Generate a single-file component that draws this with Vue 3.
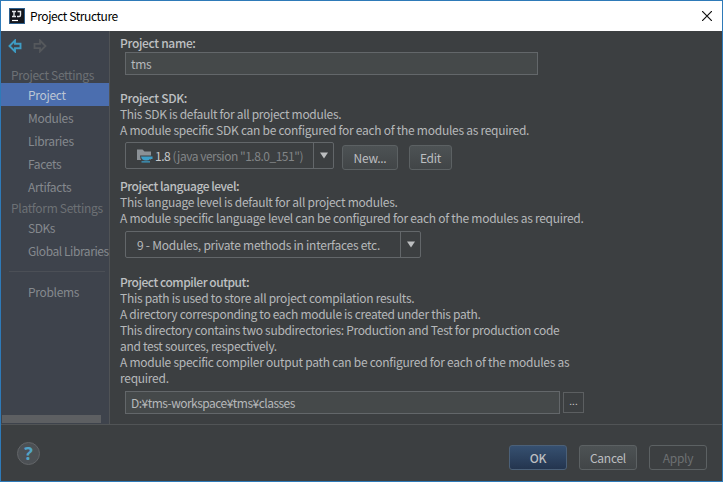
<script setup>
const projectItems = ['Project', 'Modules', 'Libraries', 'Facets', 'Artifacts']
const platformItems = ['SDKs', 'Global Libraries']
</script>

<template>
  <div class="window">
    <header class="titlebar">
      <svg class="logo" width="16" height="16" viewBox="0 0 16 16">
        <rect width="16" height="16" fill="#2f5f8c" />
        <rect x="1" y="1" width="14" height="14" fill="#14161c" />
        <path d="M3 3.500h4M5 3.500v5M3 8.500h4M8.500 3.500h3v3.500q0 1.500-1.300 1.500H8" fill="none" stroke="#e6e8ea" stroke-width="1.4" />
        <path d="M3 12.500h6" stroke="#fff" stroke-width="1.2" />
      </svg>
      <span class="title">Project Structure</span>
      <svg class="close" width="10" height="10" viewBox="0 0 10 10">
        <path d="M0 0L10 10M10 0L0 10" stroke="#111" stroke-width="1.2" />
      </svg>
    </header>
    <div class="body">
      <nav class="sidebar">
        <div class="arrows">
          <svg width="14" height="14" viewBox="0 0 14 14"><path d="M7 1.500L1.500 7L7 12.500V9.200H12.500V4.800H7Z" fill="none" stroke="#3e9cc4" stroke-width="1.9" /></svg>
          <svg width="14" height="14" viewBox="0 0 14 14"><path d="M7 1.500L12.500 7L7 12.500V9.200H1.500V4.800H7Z" fill="none" stroke="#55585c" stroke-width="1.8" /></svg>
        </div>
        <div class="group first"><span>Project Settings</span></div>
        <div v-for="(item, i) in projectItems" :key="item" class="item" :class="{ active: i === 0 }">{{ item }}</div>
        <div class="group second"><span>Platform Settings</span></div>
        <div v-for="item in platformItems" :key="item" class="item"><span>{{ item }}</span></div>
        <div class="rule"></div>
        <div class="item">Problems</div>
        <div class="scrollbar"></div>
      </nav>
      <main class="content">
        <section class="name">
          <h2>Project name:</h2>
          <div class="field name-field">tms</div>
        </section>
        <section class="sdk">
          <h2>Project SDK:</h2>
          <p class="tight">This SDK is default for all project modules.</p>
          <p>A module specific SDK can be configured for each of the modules as required.</p>
          <div class="controls">
            <div class="combo sdk-combo">
              <svg class="folder" width="16" height="14" viewBox="0 0 16 14">
                <path d="M0 0.500H5.500L7.500 2.500H14V11H0Z" fill="#8b9196" />
                <path d="M3 6.500H16V10.500H13L12 12H5Q3 10 3 6.500Z" fill="#3d4043" />
                <path d="M4 7.500H15.500V10H13Q12 11.500 9 11.500Q4.500 11.500 4 7.500ZM4.500 12.200H13V13.500H4.500Z" fill="#3d9ec8" />
              </svg>
              <span class="combo-text"><b>1.8</b> <i>(java version "1.8.0_151")</i></span>
              <span class="drop"><svg width="10" height="7" viewBox="0 0 10 7"><path d="M1 0.500H9L5 6.500Z" fill="#bcbec0" /></svg></span>
            </div>
            <button class="btn new">New...</button>
            <button class="btn edit">Edit</button>
          </div>
        </section>
        <section class="level">
          <h2 class="long">Project language level:</h2>
          <p>This language level is default for all project modules.</p>
          <p>A module specific language level can be configured for each of the modules as required.</p>
          <div class="combo level-combo">
            <span class="combo-text">9 - Modules, private methods in interfaces etc.</span>
            <span class="drop"><svg width="10" height="7" viewBox="0 0 10 7"><path d="M1 0.500H9L5 6.500Z" fill="#bcbec0" /></svg></span>
          </div>
        </section>
        <section class="output">
          <h2 class="long">Project compiler output:</h2>
          <p>This path is used to store all project compilation results.</p>
          <p class="tight">A directory corresponding to each module is created under this path.</p>
          <p class="tight">This directory contains two subdirectories: Production and Test for production code</p>
          <p class="tight">and test sources, respectively.</p>
          <p>A module specific compiler output path can be configured for each of the modules as</p>
          <p>required.</p>
          <div class="path-row">
            <div class="field path-field">D:¥tms-workspace¥tms¥classes</div>
            <button class="browse">...</button>
          </div>
        </section>
      </main>
    </div>
    <footer class="footer">
      <span class="help">?</span>
      <button class="btn ok">OK</button>
      <button class="btn cancel">Cancel</button>
      <button class="btn apply">Apply</button>
    </footer>
  </div>
</template>

<style>
html, body { margin: 0; overflow: hidden; }
</style>
<style scoped>
* { box-sizing: border-box; }
.window {
  width: 723px; height: 482px; display: flex; flex-direction: column;
  border: 1px solid #2e7ab8; background: #3c3f41; color: #b6b8ba;
  font: 12px/16px "Noto Sans CJK JP", "Noto Sans", sans-serif; white-space: nowrap;
  letter-spacing: -0.27px;
}
.titlebar { height: 30px; flex: none; background: #fff; display: flex; align-items: center; padding: 0 10px 0 8px; color: #000; }
.title { margin-left: 5px; flex: 1; letter-spacing: -0.41px; }
.body { height: 393px; flex: none; display: flex; }
.sidebar { width: 109px; flex: none; background: #3e434c; border-right: 1px solid #505356; color: #85898e; display: flex; flex-direction: column; overflow: hidden; letter-spacing: -0.31px; }
.arrows { display: flex; gap: 11px; padding: 8px 0 0 7px; height: 35px; flex: none; }
.group { padding-left: 10px; color: #6d7175; flex: none; }
.group.first { height: 17px; line-height: 17px; }
.group.second { height: 18px; line-height: 20px; }
.item { height: 23px; line-height: 23px; padding-left: 27px; flex: none; }
.item span { letter-spacing: -0.43px; }
.item.active { background: #4b6eaf; color: #bdc6d4; }
.rule { height: 1px; margin: 9px 4px 8px 8px; background: #4b4f56; flex: none; }
.scrollbar { width: 99px; height: 8px; margin: auto 0 1px 1px; background: #5d5f62; }
.content { flex: 1; padding: 5px 0 0 10px; }
h2, p { margin: 0; font: inherit; height: 16px; }
h2 { font-weight: 500; color: #bec0c2; letter-spacing: -0.32px; }
.name h2 { line-height: 14px; }
.long { letter-spacing: -0.47px; }
.tight { letter-spacing: -0.315px; }
.name { height: 54px; }
.sdk { height: 88px; }
.level { height: 96px; }
.field { border: 1px solid #63676a; background: #45494a; height: 23px; line-height: 21px; padding-left: 5px; }
.name-field { width: 413px; margin-left: 5px; }
.controls { display: flex; margin: 4px 0 0 5px; }
.combo { height: 27px; border: 1px solid #63676a; border-radius: 2px; display: flex; align-items: center; padding-left: 11px; }
.sdk-combo { width: 209px; letter-spacing: -0.48px; }
.level-combo { width: 296px; margin: 5px 0 0 5px; letter-spacing: -0.25px; }
.combo-text { flex: 1; }
.combo b { font-weight: 400; color: #c8cacc; }
.combo i { font-style: normal; color: #828587; }
.folder { margin-right: 2px; flex: none; }
.drop { width: 20px; height: 25px; flex: none; border-left: 1px solid #63676a; display: flex; align-items: center; justify-content: center; }
.btn { font: inherit; letter-spacing: inherit; color: #bcbec0; height: 25px; padding: 0; border: 1px solid #5c6163; border-radius: 3px; background: linear-gradient(#4d5254, #414547); }
.new { width: 56px; margin: 3px 0 0 8px; }
.edit { width: 43px; margin: 3px 0 0 11px; }
.path-row { display: flex; gap: 3px; margin: 5px 0 0 5px; align-items: center; }
.path-field { width: 435px; letter-spacing: -0.52px; }
.browse { width: 21px; height: 21px; border: 1px solid #5c5f61; background: #3c3f41; color: #ccc; font: inherit; font-size: 10px; line-height: 12px; padding: 0 0 4px; }
.footer { flex: 1; border-top: 1px solid #515456; display: flex; align-items: flex-start; padding: 20px 15px 0 16px; }
.footer .btn { width: 58px; margin-left: 12px; }
.footer .help { width: 23px; height: 23px; border-radius: 50%; border: 1px solid #626568; background: #4c5054; color: #52a4c7; font: bold 18px/21px "Open Sans", sans-serif; text-align: center; margin: -3px auto 0 0; }
.footer .ok { background: linear-gradient(#365070, #24354f); border-color: #4b6078; font-weight: 500; }
.footer .apply { background: none; color: #6d7072; }
</style>
